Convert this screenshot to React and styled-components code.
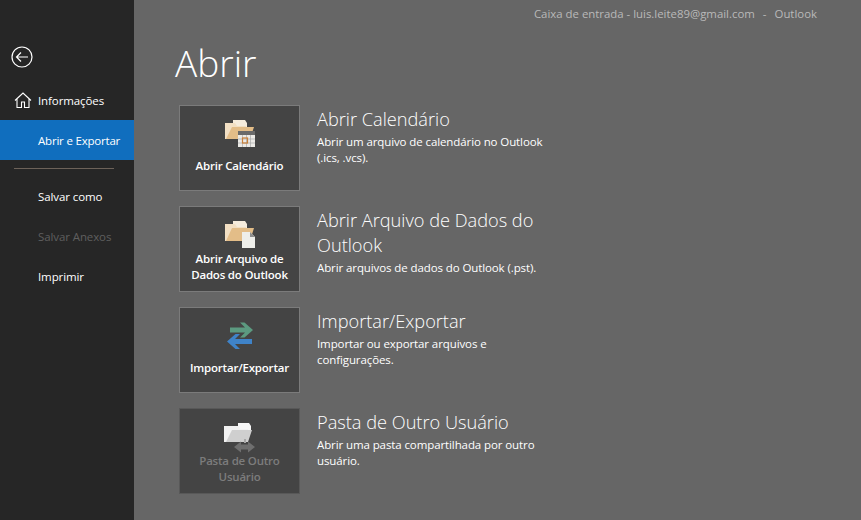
import React from 'react';
import styled, { createGlobalStyle } from 'styled-components';

const GlobalStyle = createGlobalStyle`
  html, body {
    margin: 0;
    padding: 0;
    height: 100%;
    background: #666666;
    font-family: 'Open Sans', 'Noto Sans', 'Liberation Sans', sans-serif;
  }
`;

const Window = styled.div`
  display: flex;
  width: 861px;
  height: 520px;
  overflow: hidden;
  background: #666666;
`;

const Sidebar = styled.nav`
  display: flex;
  flex-direction: column;
  flex: 0 0 134px;
  background: #262626;
  color: #ffffff;
`;

const BackButton = styled.div`
  display: flex;
  align-items: center;
  height: 80px;
  padding: 34px 0 0 11px;
  box-sizing: border-box;
`;

const NavItem = styled.div`
  display: flex;
  align-items: center;
  gap: 6px;
  height: 40px;
  padding-left: ${(p) => (p.$icon ? '14px' : '38px')};
  font-size: 11.5px;
  letter-spacing: ${(p) => (p.$active ? '-0.2px' : '-0.1px')};
  background: ${(p) => (p.$active ? '#106ebe' : 'transparent')};
  color: ${(p) => (p.$disabled ? '#5f5f5f' : '#ffffff')};
`;

const NavDivider = styled.hr`
  width: 100px;
  height: 1px;
  margin: 8px 0 7px 14px;
  border: 0;
  background: #6d6259;
`;

const Main = styled.main`
  flex: 1;
  display: flex;
  flex-direction: column;
  min-width: 0;
`;

const Header = styled.header`
  display: flex;
  justify-content: flex-end;
  gap: 8px;
  height: 30px;
  padding: 6px 44px 0 0;
  box-sizing: border-box;
  font-size: 11.4px;
  line-height: 16px;
  color: #b9b9b9;
`;

const Title = styled.h1`
  margin: 9px 0 0 41px;
  height: 66px;
  font-size: 37px;
  line-height: 48px;
  font-weight: 300;
  color: #ffffff;
`;

const List = styled.div`
  display: flex;
  flex-direction: column;
  gap: 15px;
  padding-left: 45px;
`;

const Row = styled.section`
  display: flex;
  gap: 17px;
`;

const ActionButton = styled.div`
  display: flex;
  flex-direction: column;
  align-items: center;
  flex: 0 0 121px;
  height: 86px;
  box-sizing: border-box;
  padding-top: 14px;
  background: #444444;
  border: 1px solid ${(p) => (p.$disabled ? '#585858' : '#7b7b7b')};
  color: ${(p) => (p.$disabled ? '#7c7c7c' : '#ffffff')};
  font-size: 11.5px;
  line-height: 16px;
  font-weight: 600;
  letter-spacing: -0.2px;
  text-align: center;
`;

const IconSlot = styled.div`
  height: ${(p) => p.$h};
  display: flex;
  align-items: flex-start;
  justify-content: center;
`;

const Info = styled.div`
  width: 245px;
  padding-top: 2px;
  color: #ffffff;
`;

const InfoTitle = styled.h2`
  margin: 0;
  font-size: 18.2px;
  line-height: 25px;
  font-weight: 300;
`;

const InfoText = styled.p`
  margin: 2px 0 0;
  font-size: 11.5px;
  line-height: 16px;
  letter-spacing: -0.1px;
`;

const BackIcon = () => (
  <svg width="22" height="22" viewBox="0 0 22 22" fill="none" stroke="#fff" strokeWidth="1.2">
    <circle cx="11" cy="11" r="10" />
    <path d="M17 11H5.5M10 6.500 5.500 11l4.500 4.500" />
  </svg>
);

const HomeIcon = () => (
  <svg width="18" height="18" viewBox="0 0 18 18" fill="none" stroke="#fff" strokeWidth="1.1">
    <path d="M1 9.500 9 2l8 7.500M3 8v8.500h4.500V11h3v5.500H15V8" />
  </svg>
);

const CalendarIcon = () => (
  <svg width="30" height="27" viewBox="0 0 30 27">
    <path d="M8 0h12l2 3v6H8z" fill="#f6ecdc" />
    <path d="M0 3h10l2 3h9v13H0z" fill="#f2dfc3" />
    <path d="M1 19 7 7h22l-4 12z" fill="#e3bd88" />
    <rect x="13" y="11" width="17" height="4" fill="#6a6a6a" />
    <rect x="13" y="15" width="17" height="12" fill="#eceae6" />
    <path d="M13 19h17M13 23h17M17.500 15v12M21.500 15v12M25.500 15v12" stroke="#a9a9a9" strokeWidth="0.7" />
    <rect x="17.500" y="18" width="5" height="5" fill="none" stroke="#c9803a" strokeWidth="1.2" />
  </svg>
);

const DataFileIcon = () => (
  <svg width="30" height="27" viewBox="0 0 30 27">
    <path d="M8 0h12l2 3v6H8z" fill="#f6ecdc" />
    <path d="M0 3h10l2 3h9v14H0z" fill="#f2dfc3" />
    <path d="M1 20 7 7h22l-4 13z" fill="#e3bd88" />
    <path d="M17 11h8l5 5v11H17z" fill="#eeeeea" />
    <path d="M25 11l5 5h-5z" fill="#8d8d8d" />
  </svg>
);

const TransferIcon = () => (
  <svg width="28" height="27" viewBox="0 0 28 27">
    <path d="M4 5.500h15L14 .5h4.500L27 8l-8.500 7.500H14l5-5H4z" fill="#5c9a80" />
    <path d="M26 17H9l5-5H9.500L1 19.500 9.500 27H14l-5-5h17z" fill="#3f83c8" />
  </svg>
);

const SharedFolderIcon = () => (
  <svg width="32" height="30" viewBox="0 0 32 30">
    <path d="M14 0h11l2 3v6H14z" fill="#f7f7f7" />
    <path d="M0 3h14l2 3h8v13H0z" fill="#f2f2f2" />
    <path d="M2 19 8 7h20l-4 12z" fill="#cfcfcf" />
    <path d="M20 16h2v4h-2z" fill="#a8a8a8" />
    <path d="M10 24l7-5.500v3h7v-3l7 5.500-7 5.500v-3h-7v3z" fill="#6f6f6f" />
  </svg>
);

const items = [
  {
    label: ['Abrir Calendário'],
    icon: <CalendarIcon />,
    title: 'Abrir Calendário',
    text: 'Abrir um arquivo de calendário no Outlook (.ics, .vcs).',
    slot: '38px',
  },
  {
    label: ['Abrir Arquivo de', 'Dados do Outlook'],
    icon: <DataFileIcon />,
    title: 'Abrir Arquivo de Dados do Outlook',
    text: 'Abrir arquivos de dados do Outlook (.pst).',
    slot: '30px',
  },
  {
    label: ['Importar/Exportar'],
    icon: <TransferIcon />,
    title: 'Importar/Exportar',
    text: 'Importar ou exportar arquivos e configurações.',
    slot: '38px',
  },
  {
    label: ['Pasta de Outro', 'Usuário'],
    icon: <SharedFolderIcon />,
    title: 'Pasta de Outro Usuário',
    text: 'Abrir uma pasta compartilhada por outro usuário.',
    slot: '30px',
    disabled: true,
  },
];

export default function App() {
  return (
    <>
      <GlobalStyle />
      <Window>
        <Sidebar>
          <BackButton>
            <BackIcon />
          </BackButton>
          <NavItem $icon>
            <HomeIcon />
            Informações
          </NavItem>
          <NavItem $active>Abrir e Exportar</NavItem>
          <NavDivider />
          <NavItem>Salvar como</NavItem>
          <NavItem $disabled>Salvar Anexos</NavItem>
          <NavItem>Imprimir</NavItem>
        </Sidebar>
        <Main>
          <Header>
            <span>Caixa de entrada - luis.leite89@gmail.com</span>
            <span>-</span>
            <span>Outlook</span>
          </Header>
          <Title>Abrir</Title>
          <List>
            {items.map((item) => (
              <Row key={item.title}>
                <ActionButton $disabled={item.disabled}>
                  <IconSlot $h={item.slot}>{item.icon}</IconSlot>
                  {item.label.map((line) => (
                    <div key={line}>{line}</div>
                  ))}
                </ActionButton>
                <Info>
                  <InfoTitle>{item.title}</InfoTitle>
                  <InfoText>{item.text}</InfoText>
                </Info>
              </Row>
            ))}
          </List>
        </Main>
      </Window>
    </>
  );
}
